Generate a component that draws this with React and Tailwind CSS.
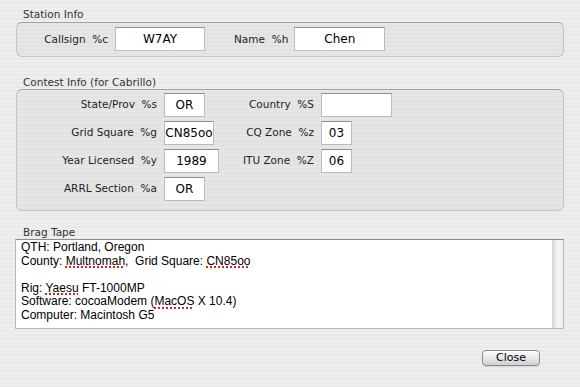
const stripes =
  "bg-[repeating-linear-gradient(180deg,#eeeeee_0px,#eeeeee_2px,#e9e9e9_2px,#e9e9e9_4px)]";

function Field({ value, w, h = "h-[24px]" }) {
  return (
    <div
      className={`${w} ${h} shrink-0 bg-white border border-[#bcbcbc] border-t-[#8f8f8f] flex items-center justify-center text-[12px] text-black font-['DejaVu_Sans',sans-serif]`}
    >
      {value}
    </div>
  );
}

function Label({ children, w, className = "" }) {
  return (
    <div
      className={`${w} shrink-0 text-right text-[10.5px] text-[#222] font-['DejaVu_Sans',sans-serif] whitespace-pre ${className}`}
    >
      {children}
    </div>
  );
}

function Header({ children, className = "" }) {
  return (
    <div
      className={`pl-[7px] h-[13px] leading-[13px] text-[10.5px] text-[#333] font-['DejaVu_Sans',sans-serif] ${className}`}
    >
      {children}
    </div>
  );
}

function Box({ children, className = "" }) {
  return (
    <div
      className={`rounded-[6px] border border-[#c4c4c4] border-t-[#a2a2a2] bg-[repeating-linear-gradient(180deg,#e6e6e6_0px,#e6e6e6_2px,#e2e2e2_2px,#e2e2e2_4px)] ${className}`}
    >
      {children}
    </div>
  );
}

function Misspelled({ children }) {
  return (
    <span className="underline decoration-dotted decoration-[#e02020] decoration-2 underline-offset-[2px]">
      {children}
    </span>
  );
}

export default function App() {
  const contestRows = [
    { l: "State/Prov  %s", v: "OR", w: "w-[41px]", r: "Country  %S", rv: "", rw: "w-[71px]" },
    { l: "Grid Square  %g", v: "CN85oo", w: "w-[50px]", r: "CQ Zone  %z", rv: "03", rw: "w-[31px]" },
    { l: "Year Licensed  %y", v: "1989", w: "w-[55px]", r: "ITU Zone  %Z", rv: "06", rw: "w-[31px]" },
    { l: "ARRL Section  %a", v: "OR", w: "w-[41px]" },
  ];

  return (
    <div className={`w-[580px] h-[387px] ${stripes} px-[16px] pt-[8px] overflow-hidden`}>
      <Header className="mb-[1px]">Station Info</Header>
      <Box className="h-[35px] flex items-start pt-[4px]">
        <Label w="w-[91px]" className="leading-[24px]">Callsign  %c</Label>
        <div className="ml-[7px]">
          <Field value="W7AY" w="w-[90px]" />
        </div>
        <div className="ml-[29px] text-[10.5px] text-[#222] font-['DejaVu_Sans',sans-serif] whitespace-pre leading-[24px]">
          Name  %h
        </div>
        <div className="ml-[6px]">
          <Field value="Chen" w="w-[91px]" />
        </div>
      </Box>

      <Header className="mt-[19px]">Contest Info (for Cabrillo)</Header>
      <Box className="h-[122px] pt-[3px] flex flex-col gap-[4px]">
        {contestRows.map((row) => (
          <div key={row.l} className="flex items-center h-[24px]">
            <div className="w-[203px] shrink-0 flex items-center">
              <Label w="w-[140px]">{row.l}</Label>
              <div className="ml-[7px]">
                <Field value={row.v} w={row.w} />
              </div>
            </div>
            {row.r && (
              <>
                <Label w="w-[94px]">{row.r}</Label>
                <div className="ml-[7px]">
                  <Field value={row.rv} w={row.rw} />
                </div>
              </>
            )}
          </div>
        ))}
      </Box>

      <Header className="mt-[15px] text-[#222]">Brag Tape</Header>
      <div className="-ml-[1px] h-[90px] bg-white border border-[#b8b8b8] border-t-[#8c8c8c] flex">
        <div className="flex-1 pl-[5px] pt-[1px] text-[12px] leading-[13.6px] text-black font-['Liberation_Sans',Arial,sans-serif]">
          <div>QTH: Portland, Oregon</div>
          <div>
            County: <Misspelled>Multnomah</Misspelled>,&nbsp; Grid Square: <Misspelled>CN85oo</Misspelled>
          </div>
          <div>&nbsp;</div>
          <div>
            Rig: <Misspelled>Yaesu</Misspelled> FT-1000MP
          </div>
          <div>
            Software: cocoaModem (<Misspelled>MacOS</Misspelled> X 10.4)
          </div>
          <div>Computer: Macintosh G5</div>
        </div>
        <div className="w-[11px] shrink-0 border-l border-[#d8d8d8] bg-gradient-to-r from-[#dcdcdc] via-[#f7f7f7] to-[#ececec]" />
      </div>

      <div className="flex justify-end mt-[21px] pr-[24px]">
        <button className="w-[58px] h-[16px] rounded-[4px] border border-[#8a8a8a] bg-gradient-to-b from-[#fdfdfd] via-[#e8e8e8] to-[#cfcfcf] text-[11px] leading-[14px] text-black font-['DejaVu_Sans',sans-serif] shadow-[0_1px_0_rgba(0,0,0,0.08)]">
          Close
        </button>
      </div>
    </div>
  );
}
